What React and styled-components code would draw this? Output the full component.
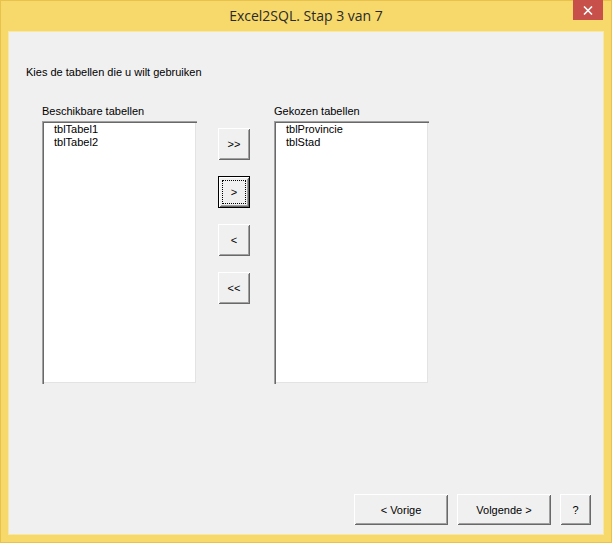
import React from "react";
import styled, { createGlobalStyle, css } from "styled-components";

const GlobalStyle = createGlobalStyle`
  html, body {
    margin: 0;
    padding: 0;
    background: #f6d86b;
  }
  * {
    box-sizing: border-box;
  }
`;

const leftItems = ["tblTabel1", "tblTabel2"];
const rightItems = ["tblProvincie", "tblStad"];
const moveButtons = [
  { label: ">>" },
  { label: ">", focused: true },
  { label: "<" },
  { label: "<<" },
];

const App = () => {
  return (
    <>
      <GlobalStyle />
      <Window>
        <TitleBar>
          <Title>Excel2SQL. Stap 3 van 7</Title>
          <CloseButton aria-label="Sluiten">
            <svg width="10" height="9" viewBox="0 0 10 9">
              <path d="M1 0.5 L9 8.5 M9 0.5 L1 8.5" stroke="#fff" strokeWidth="1.6" />
            </svg>
          </CloseButton>
        </TitleBar>
        <Client>
          <Instruction>Kies de tabellen die u wilt gebruiken</Instruction>
          <ListsRow>
            <ListColumn>
              <Label>Beschikbare tabellen</Label>
              <ListBox>
                {leftItems.map((item) => (
                  <ListItem key={item}>{item}</ListItem>
                ))}
              </ListBox>
            </ListColumn>
            <MoveColumn>
              {moveButtons.map((b) => (
                <SmallButton key={b.label} $focused={b.focused}>
                  {b.focused ? <FocusRect>{b.label}</FocusRect> : b.label}
                </SmallButton>
              ))}
            </MoveColumn>
            <ListColumn>
              <Label>Gekozen tabellen</Label>
              <ListBox>
                {rightItems.map((item) => (
                  <ListItem key={item}>{item}</ListItem>
                ))}
              </ListBox>
            </ListColumn>
          </ListsRow>
          <Footer>
            <WideButton>&lt; Vorige</WideButton>
            <WideButton>Volgende &gt;</WideButton>
            <HelpButton>?</HelpButton>
          </Footer>
        </Client>
      </Window>
    </>
  );
};

export default App;

// Styled Components
const Window = styled.div`
  width: 612px;
  height: 543px;
  display: flex;
  flex-direction: column;
  background: #f6d86b;
  border: 1px solid #e8c24c;
  padding: 0 7px 7px 7px;
`;

const TitleBar = styled.div`
  height: 30px;
  display: flex;
  align-items: center;
  justify-content: center;
  position: relative;
`;

const Title = styled.div`
  font-family: "Open Sans", "Noto Sans", sans-serif;
  font-size: 14px;
  color: #2a2a2a;
  margin-top: -1px;
`;

const CloseButton = styled.div`
  position: absolute;
  top: -1px;
  right: 1px;
  width: 30px;
  height: 20px;
  background: #c7504b;
  display: flex;
  align-items: center;
  justify-content: center;
`;

const Client = styled.div`
  flex: 1;
  display: flex;
  flex-direction: column;
  background: #f0f0f0;
  border: 1px solid #f9e7a6;
  padding: 34px 12px 9px 17px;
  font-family: "Liberation Sans", Arial, sans-serif;
  font-size: 11px;
  color: #000;
`;

const Instruction = styled.div`
  line-height: 13px;
  height: 13px;
`;

const ListsRow = styled.div`
  display: flex;
  align-items: flex-start;
  margin-top: 26px;
  margin-left: 16px;
`;

const ListColumn = styled.div`
  display: flex;
  flex-direction: column;
`;

const Label = styled.div`
  line-height: 13px;
  height: 16px;
`;

const ListBox = styled.div`
  width: 155px;
  height: 263px;
  background: #fff;
  padding: 2px 0 0 12px;
  box-shadow: inset 1px 1px 0 #a0a0a0, inset 2px 2px 0 #696969,
    inset -1px -1px 0 #f0f0f0, inset -2px -2px 0 #e3e3e3;
`;

const ListItem = styled.div`
  line-height: 13px;
  height: 13px;
  white-space: nowrap;
`;

const MoveColumn = styled.div`
  display: flex;
  flex-direction: column;
  gap: 16px;
  padding-top: 23px;
  margin: 0 24px 0 21px;
`;

const raised = css`
  background: #f0f0f0;
  box-shadow: inset 1px 1px 0 #ffffff, inset -1px -1px 0 #696969,
    inset 2px 2px 0 #f0f0f0, inset -2px -2px 0 #a0a0a0;
`;

const SmallButton = styled.div`
  ${raised}
  width: 32px;
  height: 32px;
  display: flex;
  align-items: center;
  justify-content: center;
  padding-bottom: 1px;
  ${(p) =>
    p.$focused &&
    css`
      border: 1px solid #000;
      padding: 3px;
    `}
`;

const FocusRect = styled.div`
  width: 100%;
  height: 100%;
  border: 1px dotted #000;
  display: flex;
  align-items: center;
  justify-content: center;
`;

const Footer = styled.div`
  margin-top: auto;
  display: flex;
  justify-content: flex-end;
  gap: 9px;
`;

const WideButton = styled.div`
  ${raised}
  width: 94px;
  height: 31px;
  display: flex;
  align-items: center;
  justify-content: center;
`;

const HelpButton = styled(WideButton)`
  width: 31px;
`;
